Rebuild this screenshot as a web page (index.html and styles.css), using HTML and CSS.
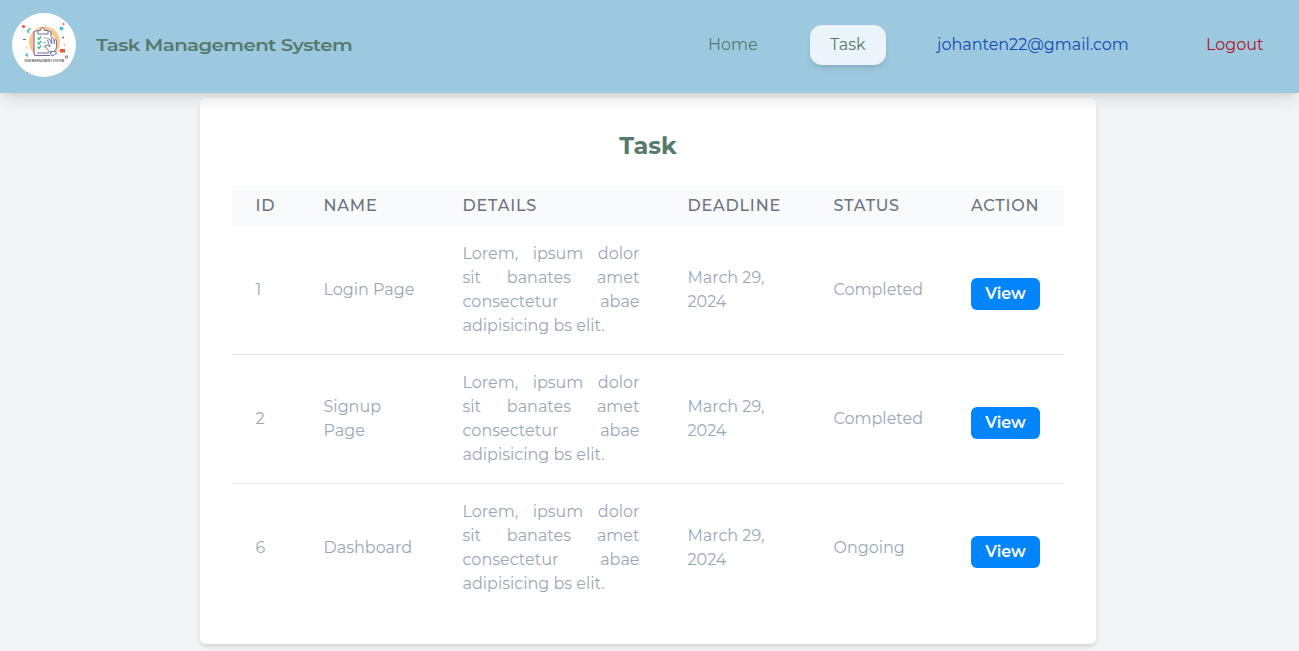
FILE: index.html
```html
<!DOCTYPE html>
<html lang="en">
<head>
<meta charset="utf-8">
<title>Task Management System</title>
<link rel="stylesheet" href="styles.css">
</head>
<body>
<header class="navbar">
  <a class="brand" href="#">
    <svg class="logo" viewBox="0 0 64 64" aria-hidden="true">
      <circle cx="32" cy="32" r="32" fill="#fff"/>
      <circle cx="32.500" cy="29" r="15.500" fill="#ffc58b"/>
      <ellipse cx="33" cy="32" rx="11.500" ry="13.500" fill="#fff"/>
      <path d="M22 17h17v26H22z" fill="#fff"/>
      <path d="M26 18h-2.500q-1.500 0-1.500 1.500v20q0 3 2 3h14M35 18h2.500q1.500 0 1.500 1.500v4M25 40h12" fill="none" stroke="#6c6b9c" stroke-width="1.100"/>
      <path d="M26 21v-3.500h2.500q.5-3 2-3t2 3H36V21z" fill="#fff" stroke="#6c6b9c" stroke-width="1"/>
      <path d="M25.500 25l1.500 1.500 2-3M25.500 29.500l1.500 1.500 2-3M25.500 34l1.500 1.500 2-3" fill="none" stroke="#38b98a" stroke-width="1.400"/>
      <path d="M31 25h5M31 29.500h3M31 34h2" stroke="#9998ba" stroke-width=".8"/>
      <path d="M33 33l2.500-1 2.500 2-2.500-7q1-2 2.500 0l2 4-1-6q1.500-2 2.500.5l1 5V27q1.500-1.500 2 1v6q0 3-3 4.500l-4 .5z" fill="#fff" stroke="#6c6b9c" stroke-width=".9" stroke-linejoin="round"/>
      <path d="M38 39.500l5-1.500 1.500 2.500-4.500 2.500z" fill="#fff" stroke="#6c6b9c" stroke-width="1"/>
      <path d="M18.500 15l-3 3 1.500 2" fill="none" stroke="#48b899" stroke-width="1.400"/>
      <circle cx="11.500" cy="13.500" r="1.600" fill="#f4572f"/>
      <circle cx="49.500" cy="15.500" r="2" fill="#55b8e6"/>
      <circle cx="51.500" cy="11" r="1.100" fill="#f4572f"/>
      <path d="M11 26.500h3" stroke="#6c6b9c" stroke-width="1"/>
      <circle cx="51" cy="24.500" r="1" fill="#6c6b9c"/>
      <circle cx="52.500" cy="32" r="1" fill="#ffb466"/>
      <circle cx="14.500" cy="34.500" r=".8" fill="#ffb466"/>
      <path d="M48 36h5v3.500h-5z" fill="#f4572f"/>
      <path d="M12.500 42l3.500-2v4z" fill="#55b8e6"/>
      <path d="M53.500 43h2.200v2h-2.200z" fill="none" stroke="#6c6b9c" stroke-width=".8"/>
      <circle cx="15.500" cy="59.500" r=".7" fill="#48b899"/>
      <text class="logo-text" x="32" y="49.200" text-anchor="middle" textLength="40" lengthAdjust="spacingAndGlyphs">TASK MANAGEMENT SYSTEM</text>
    </svg>
    <span class="brand-name">Task Management System</span>
  </a>
  <nav class="links">
    <a class="link" href="#">Home</a>
    <a class="link active" href="#">Task</a>
    <a class="link email" href="#">johanten22@gmail.com</a>
    <a class="link logout" href="#">Logout</a>
  </nav>
</header>
<main class="card">
  <h1 class="title">Task</h1>
  <table class="tasks">
    <colgroup><col class="c-id"><col class="c-name"><col class="c-details"><col class="c-deadline"><col class="c-status"><col class="c-action"></colgroup>
    <thead>
      <tr><th>ID</th><th>NAME</th><th>DETAILS</th><th>DEADLINE</th><th>STATUS</th><th>ACTION</th></tr>
    </thead>
    <tbody>
      <tr>
        <td>1</td><td>Login Page</td>
        <td class="details">Lorem, ipsum dolor sit banates amet consectetur abae adipisicing bs elit.</td>
        <td>March 29,<br>2024</td><td>Completed</td><td class="action"><button class="view">View</button></td>
      </tr>
      <tr>
        <td>2</td><td>Signup<br>Page</td>
        <td class="details">Lorem, ipsum dolor sit banates amet consectetur abae adipisicing bs elit.</td>
        <td>March 29,<br>2024</td><td>Completed</td><td class="action"><button class="view">View</button></td>
      </tr>
      <tr>
        <td>6</td><td>Dashboard</td>
        <td class="details">Lorem, ipsum dolor sit banates amet consectetur abae adipisicing bs elit.</td>
        <td>March 29,<br>2024</td><td>Ongoing</td><td class="action"><button class="view">View</button></td>
      </tr>
    </tbody>
  </table>
</main>
</body>
</html>
```
FILE: styles.css
```css
* { box-sizing: border-box; }
body {
  margin: 0;
  height: 651px;
  overflow: hidden;
  background: #f3f4f6;
  font: 400 16px/24px Montserrat, Inter, sans-serif;
}
a { text-decoration: none; color: inherit; }
.navbar {
  position: relative;
  z-index: 1;
  height: 93px;
  padding: 0 0 4px 12px;
  display: flex;
  align-items: center;
  justify-content: space-between;
  background: #9dc9e0;
  color: #557a6b;
  box-shadow: 0 10px 15px -3px rgba(0,0,0,.1), 0 4px 6px -4px rgba(0,0,0,.1);
}
.brand { display: flex; align-items: center; gap: 20px; }
.logo { width: 64px; height: 64px; display: block; }
.logo-text { font: 600 3px Inter, sans-serif; fill: #444; }
.brand-name {
  font-size: 17px;
  font-weight: 600;
  letter-spacing: -.5px;
  white-space: nowrap;
  transform: scaleX(1.16);
  transform-origin: left;
}
.links { display: flex; padding-right: 16px; }
.link { height: 40px; padding: 8px 20px; white-space: nowrap; }
.link:first-child { width: 90px; }
.link.active {
  width: 76px;
  margin: 0 31px 0 32px;
  border-radius: 12px;
  background: #eaf4fa;
  box-shadow: 0 4px 6px -1px rgba(0,0,0,.1), 0 2px 4px -2px rgba(0,0,0,.1);
}
.email { width: 232px; margin-right: 37px; color: #1048b4; }
.logout { width: 97px; color: #b0141d; }
.card {
  width: 896px;
  height: 546px;
  margin: 5px 0 0 200px;
  padding: 32px;
  border-radius: 6px;
  background: #fff;
  box-shadow: 0 4px 6px -1px rgba(0,0,0,.1), 0 2px 4px -2px rgba(0,0,0,.1);
}
.title { margin: 0 0 24px; text-align: center; font-size: 24px; line-height: 32px; font-weight: 700; color: #557a6b; }
.tasks { width: 832px; table-layout: fixed; border-collapse: separate; border-spacing: 0; color: #9aa7b8; }
.c-id { width: 68px; }
.c-name { width: 139px; }
.c-details { width: 225px; }
.c-deadline { width: 146px; }
.c-status { width: 137px; }
.c-action { width: 117px; }
th {
  height: 40px;
  padding: 0 0 0 23.500px;
  background: #f9fafb;
  color: #6b7280;
  font-weight: 500;
  text-align: left;
  letter-spacing: .8px;
}
td { height: 129px; padding: 0 0 0 23.500px; border-bottom: 1px solid #e5e7eb; }
tbody tr:last-child td { height: 128px; border-bottom: 0; }
th:last-child, td:last-child { padding-left: 24px; }
td.details { padding-right: 24.500px; text-align: justify; }
.view {
  display: block;
  width: 69px;
  height: 32px;
  margin-top: 8px;
  padding: 0;
  border: 0;
  border-radius: 6px;
  background: #0284fa;
  color: #fff;
  font: 600 16px/30px Montserrat, Inter, sans-serif;
}
```
